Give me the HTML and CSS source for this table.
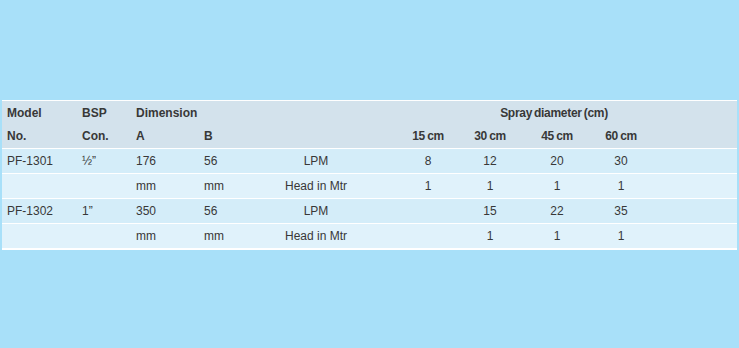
FILE: index.html
```html
<!DOCTYPE html>
<html>
<head>
<meta charset="utf-8">
<link rel="stylesheet" href="styles.css">
</head>
<body>
<div class="sheet">
  <div class="head grid">
    <div class="c first b">Model</div>
    <div class="c b">BSP</div>
    <div class="c b">Dimension</div>
    <div class="c"></div>
    <div class="c"></div>
    <div class="c"></div>
    <div class="c"></div>
    <div class="c b ctr spray">Spray diameter (cm)</div>
    <div class="c"></div>
    <div class="c first b">No.</div>
    <div class="c b">Con.</div>
    <div class="c b">A</div>
    <div class="c b">B</div>
    <div class="c"></div>
    <div class="c"></div>
    <div class="c b ctr tight">15 cm</div>
    <div class="c b ctr tight">30 cm</div>
    <div class="c b ctr tight">45 cm</div>
    <div class="c b ctr tight">60 cm</div>
    <div class="c"></div>
  </div>
  <div class="row grid odd">
    <div class="c first">PF-1301</div>
    <div class="c">½”</div>
    <div class="c">176</div>
    <div class="c">56</div>
    <div class="c ctr">LPM</div>
    <div class="c"></div>
    <div class="c ctr">8</div>
    <div class="c ctr">12</div>
    <div class="c ctr">20</div>
    <div class="c ctr">30</div>
    <div class="c"></div>
  </div>
  <div class="row grid even">
    <div class="c first"></div>
    <div class="c"></div>
    <div class="c">mm</div>
    <div class="c">mm</div>
    <div class="c ctr">Head in Mtr</div>
    <div class="c"></div>
    <div class="c ctr">1</div>
    <div class="c ctr">1</div>
    <div class="c ctr">1</div>
    <div class="c ctr">1</div>
    <div class="c"></div>
  </div>
  <div class="row grid odd">
    <div class="c first">PF-1302</div>
    <div class="c">1”</div>
    <div class="c">350</div>
    <div class="c">56</div>
    <div class="c ctr">LPM</div>
    <div class="c"></div>
    <div class="c ctr"></div>
    <div class="c ctr">15</div>
    <div class="c ctr">22</div>
    <div class="c ctr">35</div>
    <div class="c"></div>
  </div>
  <div class="row grid even">
    <div class="c first"></div>
    <div class="c"></div>
    <div class="c">mm</div>
    <div class="c">mm</div>
    <div class="c ctr">Head in Mtr</div>
    <div class="c"></div>
    <div class="c ctr"></div>
    <div class="c ctr">1</div>
    <div class="c ctr">1</div>
    <div class="c ctr">1</div>
    <div class="c"></div>
  </div>
</div>
</body>
</html>
```
FILE: styles.css
```css
html, body {
  margin: 0;
  padding: 0;
}
body {
  background: #a8e0f9;
  width: 739px;
  height: 348px;
  overflow: hidden;
  font-family: "Liberation Sans", Arial, sans-serif;
  font-size: 12px;
  color: #383838;
}
.sheet {
  margin: 100px 2px 0 2px;
  background: #ffffff;
  padding: 1px 0 2px 0;
  display: flex;
  flex-direction: column;
  gap: 1px;
}
.grid {
  display: grid;
  grid-template-columns: 74px 54px 68px 52px 132px 15px 62px 62px 72px 56px 1fr;
}
.head {
  background: #d3e2ec;
  grid-template-rows: 23px 24px;
}
.row {
  height: 24px;
}
.odd {
  background: #d4edf9;
}
.even {
  background: #e0f2fb;
}
.c {
  display: flex;
  align-items: center;
  padding-left: 6px;
  white-space: nowrap;
}
.c.first {
  padding-left: 5px;
}
.ctr {
  justify-content: center;
  padding-left: 0;
}
.b {
  font-weight: bold;
}
.spray {
  grid-column: 8 / 11;
  letter-spacing: -0.3px;
  word-spacing: -1px;
}
.tight {
  letter-spacing: -0.4px;
  word-spacing: -0.5px;
}
```
